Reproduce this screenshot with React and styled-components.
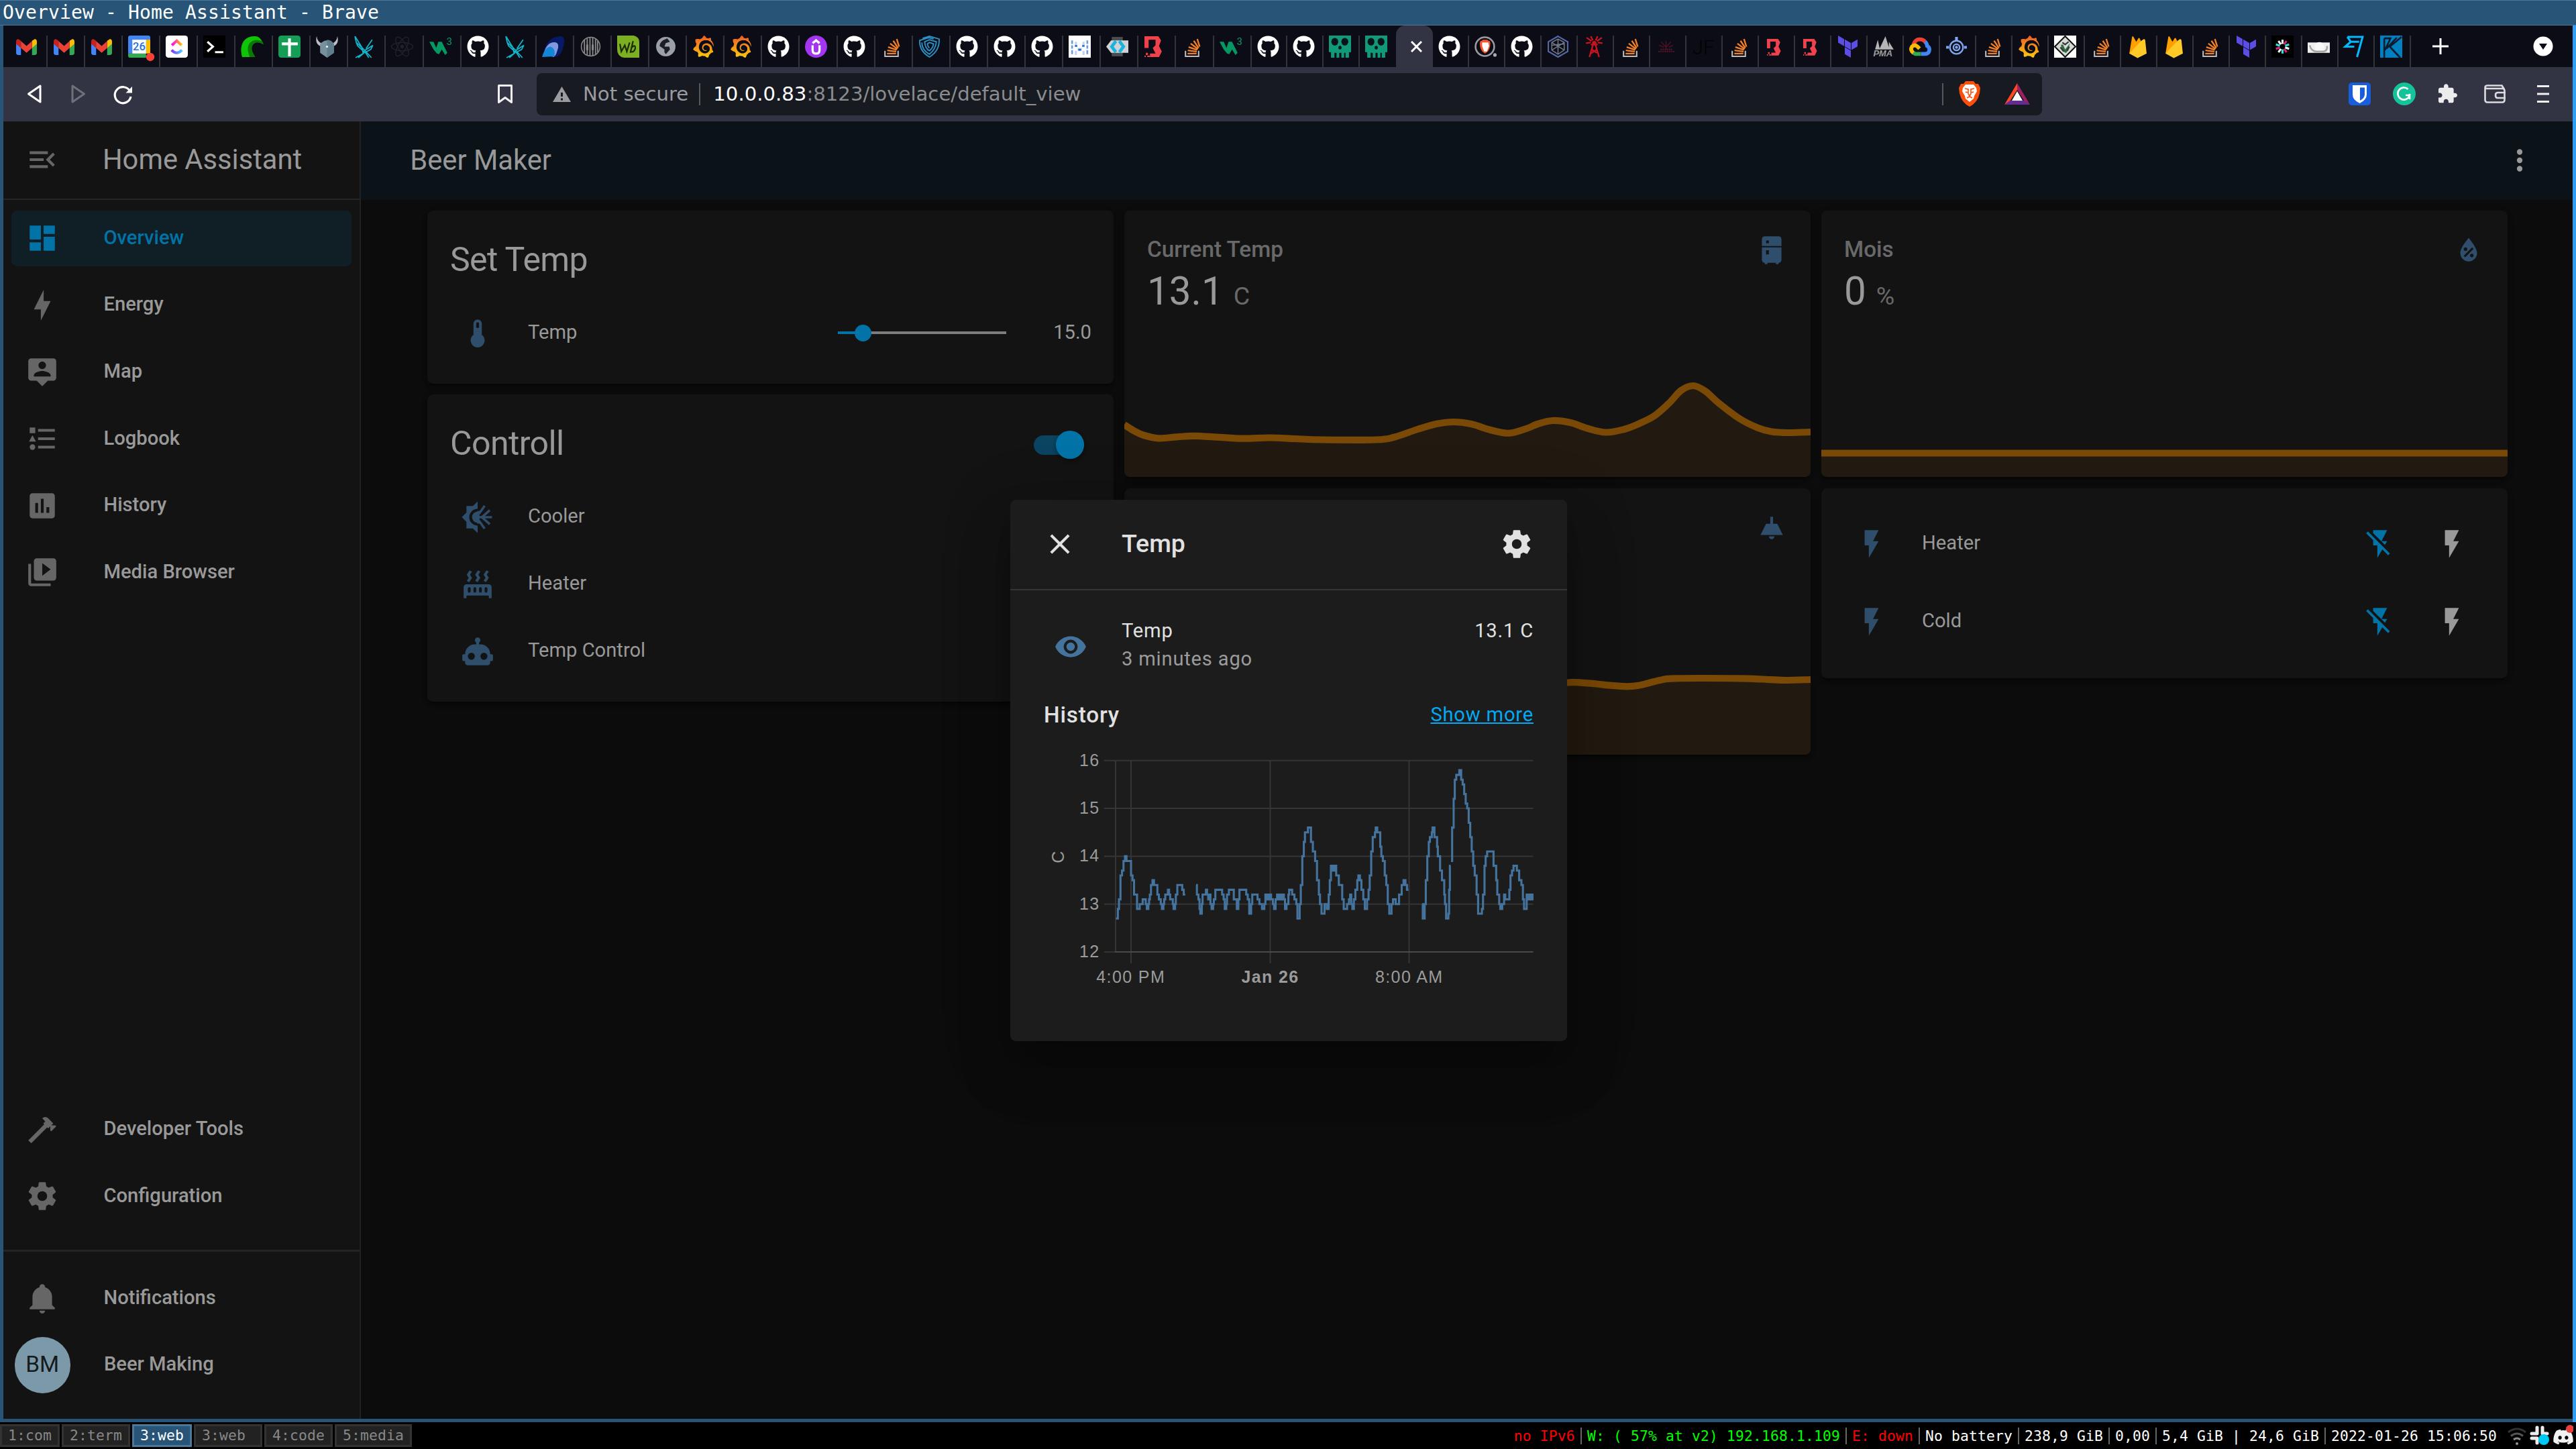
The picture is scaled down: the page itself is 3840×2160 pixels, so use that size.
import React from "react";
import styled, { createGlobalStyle } from "styled-components";
import { FaGithub, FaDiscord } from "react-icons/fa";
import { SiTerraform, SiGrafana } from "react-icons/si";

/* Page lengths are written in CSS pixels of a 200 dpi display. */
const u = (n) => `${(n * 25) / 12}px`;

const c = {
  page: "#0c0c0c",
  card: "#131313",
  header: "#0b1319",
  line: "#222222",
  text: "#999999",
  muted: "#696969",
  icon: "#666666",
  primary: "#0273a6",
  state: "#2e4e6b",
  graph: "#7a4905",
  graphFill: "#221a10",
  dialog: "#1c1c1c",
};

const Global = createGlobalStyle`
  *, *::before, *::after { box-sizing: border-box; }
  body { margin: 0; background: #000; overflow: hidden; }
`;

/* ---------- window frame ---------- */

const Desktop = styled.div`
  width: 3840px;
  height: 2160px;
  display: flex;
  flex-direction: column;
  background: #000;
  font-family: Roboto, "Noto Sans", sans-serif;
`;

const TitleBar = styled.div`
  height: 38px;
  padding-left: 4px;
  background: #285577;
  border: solid #4c7899;
  border-width: 1px 0;
  color: #fff;
  font: 28px/35px "DejaVu Sans Mono", monospace;
  letter-spacing: 0.14px;
  white-space: pre;
`;

const Window = styled.div`
  height: 2082px;
  display: flex;
  flex-direction: column;
  border-left: 5px solid #285577;
  border-right: 5px solid #2e9ef4;
  box-shadow: inset 0 -5px #285577;
  padding-bottom: 5px;
`;

/* ---------- tab strip ---------- */

const TabStrip = styled.div`
  height: 62px;
  flex: none;
  display: flex;
  align-items: flex-end;
  padding: 0 29px 0 9.5px;
  background: #0b0c16;
`;

const Tab = styled.div`
  width: ${(p) => p.$w}px;
  height: 47px;
  flex: none;
  padding-left: 8px;
  border-right: ${(p) => (p.$last ? "0" : "2px solid #333437")};
  svg { display: block; width: 33px; height: 33px; }
`;

const ActiveTab = styled.div`
  width: 55px;
  height: 62px;
  flex: none;
  display: flex;
  justify-content: center;
  padding: 23px 0 0 5px;
  border-radius: 14px 14px 0 0;
  background: #323443;
`;

const NewTab = styled.div`
  width: 88px;
  height: 62px;
  display: flex;
  align-items: center;
  justify-content: center;
`;

const TabSearch = styled.div`
  height: 62px;
  margin-left: auto;
  display: flex;
  align-items: center;
`;

const GradientDefs = styled.svg`
  position: absolute;
  width: 0;
  height: 0;
`;

const Box = ({ children, ...p }) => (
  <svg viewBox="0 0 32 32" overflow="visible" {...p}>{children}</svg>
);

const Gmail = () => (
  <Box>
    <path d="M1 8v17a3 3 0 0 0 3 3h4V13z" fill="#4285f4" />
    <path d="M31 8v17a3 3 0 0 1-3 3h-4V13z" fill="#34a853" />
    <path d="M24 7.5 28 5q3 0 3 4v3l-7 6z" fill="#fbbc04" />
    <path d="M8 7.5 4 5Q1 5 1 9v3l7 6z" fill="#c5221f" />
    <path d="M8 8l8 7 8-7v10l-8 7-8-7z" fill="#ea4335" />
  </Box>
);

const Calendar = () => (
  <Box>
    <path d="M3 0h26q3 0 3 3v6H0V3q0-3 3-3z" fill="#4285f4" />
    <path d="M0 6h6v20H0z" fill="#4285f4" />
    <path d="M26 6h6v20h-6z" fill="#fbbc04" />
    <path d="M0 26h26v6H3q-3 0-3-3z" fill="#34a853" />
    <path d="M6 6h20v20H6z" fill="#fff" />
    <text x="16" y="21.5" fontSize="16" fontFamily="Roboto, sans-serif" fontWeight="500" fill="#1a73e8" textAnchor="middle">26</text>
    <circle cx="32" cy="31" r="6" fill="#f44336" />
  </Box>
);

const ClickUp = () => (
  <Box>
    <defs>
      <linearGradient id="cuA" x1="0" x2="1"><stop stopColor="#ff02f0" /><stop offset="1" stopColor="#ffc800" /></linearGradient>
      <linearGradient id="cuB" x1="0" x2="1"><stop stopColor="#8930fd" /><stop offset="1" stopColor="#49ccf9" /></linearGradient>
    </defs>
    <rect width="32" height="32" rx="4" fill="#fff" />
    <path d="M9 14l7-6.500 7 6.500" fill="none" stroke="url(#cuA)" strokeWidth="4" />
    <path d="M8.500 21q7.500 8 15 0" fill="none" stroke="url(#cuB)" strokeWidth="4" />
  </Box>
);

const Terminal = () => (
  <Box>
    <rect width="32" height="32" fill="#000" />
    <path d="M6 9l8 7-8 7M17 24h12" fill="none" stroke="#fff" strokeWidth="3" />
  </Box>
);

const GreenHook = () => (
  <Box>
    <path d="M2 31C-3 12 6 1 20 1c7 0 11 6 13 12-7-4-13-4-16 1-3 6 1 12 4 17z" fill="#0a7a04" />
    <path d="M2 31C-3 12 6 1 20 1c5 0 8 3 10 7-8-3-16-1-19 6-2 6 0 12 2 17z" fill="#11c307" />
  </Box>
);

const Sheets = () => (
  <Box>
    <rect width="32" height="32" rx="4" fill="#159c57" />
    <path d="M16 4v26M5 12h23" stroke="#fff" strokeWidth="4" />
  </Box>
);

const Viking = () => (
  <Box>
    <path d="M1 1q-3 12 7 15l1-4Q2 9 1 1zM31 1q3 12-7 15l-1-4q7-3 8-11z" fill="#bdbdbd" />
    <path d="M6 12q10-10 20 0v13l-10 7-10-7z" fill="#78909c" />
    <path d="M16 6q6 0 10 6v13l-10 7z" fill="#607d8b" />
    <circle cx="16" cy="16" r="1.500" fill="#fff" />
  </Box>
);

const Origami = () => (
  <Box>
    <path d="M2 1l10 16 14 15M2 1l2 9 13 12M4 10l2 5 10 9M27 6l-9 13M28 14l-11 7M28 14l-3 6-9 5M17 21l-3 5-11 6M15 25l-8 7M17 24l5 8M12 17l2 9" fill="none" stroke="#12b5cb" strokeWidth="1.700" />
  </Box>
);

const Atom = () => (
  <Box fill="none" stroke="#20222b" strokeWidth="1.400">
    <ellipse cx="16" cy="16" rx="15.500" ry="6" />
    <ellipse cx="16" cy="16" rx="15.500" ry="6" transform="rotate(60 16 16)" />
    <ellipse cx="16" cy="16" rx="15.500" ry="6" transform="rotate(120 16 16)" />
    <circle cx="16" cy="16" r="2" fill="#20222b" />
  </Box>
);

const W3 = () => (
  <Box>
    <path d="M0 9h6l4 9 3-9h5l8 16-3 3-5-8-4 7-3-1-5-6z" fill="#059862" />
    <text x="25" y="14" fontSize="14" fontFamily="Roboto, sans-serif" fill="#059862">3</text>
  </Box>
);

const Wave = () => (
  <Box>
    <path d="M3 22Q8 1 29 1q5 3 2 14-2 12-10 16z" fill="#071a66" />
    <path d="M3 24Q8 8 20 10q6 2 2 12-2 7-5 9L3 27z" fill="#8098df" />
    <path d="M0 31q4-14 12-15 8 2 6 14z" fill="#1486d8" />
  </Box>
);

const Globe = () => (
  <Box fill="none" stroke="#8a8a8a">
    <circle cx="16" cy="16" r="13.500" strokeWidth="1.500" />
    <path d="M7 6v20M11 4v24M15 3v26M19 3v26M23 5v22M26 8v16" strokeWidth="1.800" />
    <path d="M11 13v8M19 13v8" strokeWidth="3" />
  </Box>
);

const GreenLeaf = () => (
  <Box>
    <path d="M0 0h24q8 2 8 10v22H10Q0 30 0 20z" fill="#7cb021" />
    <path d="M4 12l2 11 5-9 3 9 4-13M19 25l4-17M21 17q6-5 5 2-2 6-6 4" fill="none" stroke="#1d2b06" strokeWidth="2.200" />
  </Box>
);

const GreyGlobe = () => (
  <Box>
    <circle cx="16" cy="16" r="14" fill="#9aa0a6" />
    <path d="M18 4l4 5-6 2-2 5h7l1 4-6 7-2-3v-4l-7-5q0-7 11-11z" fill="#1b1e26" />
  </Box>
);

const Grafana = () => <SiGrafana fill="url(#grafana)" />;

const Purple = () => (
  <Box>
    <circle cx="16" cy="16" r="16" fill="#a435f0" />
    <path d="M11 14v7q0 5 5 5t5-5v-7M11 11l5-4 5 4" fill="none" stroke="#fff" strokeWidth="3.200" />
  </Box>
);

const GitHub = () => <FaGithub color="#fff" />;

const Overflow = () => (
  <Box>
    <path d="M6 22v8h19v-8" fill="none" stroke="#bcbbbb" strokeWidth="2" />
    <path d="M9 26h13M9.300 21.500l13 1.600M10.500 16.500l12.300 4.300M13.500 11.500l10.500 8M18 7.500l7 10.500M23 5l3.500 11" stroke="#f48024" strokeWidth="2.300" />
  </Box>
);

const Shield = () => (
  <Box fill="none" stroke="#2b8fc4" strokeWidth="1.900">
    <path d="M6 4L16 1l14 4q1 17-14 26Q1 22 2 7l13-4 7 2" />
    <path d="M5 10q0 11 11 17 9-7 10-18l-10-3-7 3q1 10 7 13 5-4 6-10l-6-2-3 2q1 5 3 6" />
  </Box>
);

const Dots = () => (
  <Box>
    <rect width="32" height="32" fill="#fff" />
    <path d="M5 7v5M27 7v5M5 14v5M27 14v5M5 21v6M27 21v6" stroke="#6f9cdb" strokeWidth="2.600" />
    <path d="M9 9h3v7H9zM20 9h3v7h-3zM13 18h6v4h-6zM9 22h3v6H9zM20 22h3v6h-3z" fill="#bdd3f4" />
    <path d="M9 15h3.500M19.500 15H23M14 20.500h4" stroke="#2c68c4" strokeWidth="2.500" />
  </Box>
);

const CodeEye = () => (
  <Box>
    <path d="M8 2h16v28H8z" fill="#4a4d50" />
    <path d="M0 16l7-9h25v18H7z" fill="#d0d3d5" />
    <path d="M14 8l-6 8 6 8M19 8l6 8-6 8" fill="none" stroke="#18b4dd" strokeWidth="4.500" />
  </Box>
);

const RedB = () => (
  <Box>
    <path d="M1 1h20l4 6-3 8 4 8-4 8H9v-5h8l-4-8 4-4V6H7v12H1z" fill="#f0424c" />
    <path d="M1 29h2v2H1zM3 25h3v3H3zM5 29h4v2H5z" fill="#f0424c" />
  </Box>
);

const SmallRedB = () => (
  <Box>
    <g transform="translate(3 4) scale(.8)">
      <path d="M1 1h20l4 6-3 8 4 8-4 8H9v-5h8l-4-8 4-4V6H7v12H1z" fill="#f0424c" />
      <path d="M1 29h2v2H1zM3 25h3v3H3zM5 29h4v2H5z" fill="#f0424c" />
    </g>
  </Box>
);

const Skull = () => (
  <Box>
    <path d="M0 0h32v24h-3v8h-5v-7h-2v7h-4v-7h-3v7h-4v-7H8v7H3v-8H0z" fill="#119a78" />
    <ellipse cx="8.500" cy="9" rx="5" ry="5.500" fill="#07151b" />
    <ellipse cx="23" cy="9" rx="5" ry="5.500" fill="#07151b" />
    <ellipse cx="16" cy="17.500" rx="2.300" ry="2.700" fill="#07151b" />
  </Box>
);

const LION = "M16 0h6l3 3 3 0 2 5-1 8q-3 12-13 16Q6 28 3 16L2 8l2-5h3l3-3z";

const Brave = () => (
  <Box>
    <circle cx="15" cy="16" r="13.500" fill="none" stroke="#9b9ba1" strokeWidth="2.500" />
    <path d={LION} transform="translate(6.500 6) scale(.55 .62)" fill="#fb542b" />
    <path d="M11 10h9l1 5-3 8h-4l-3-8z" fill="#fff" />
    <circle cx="29.500" cy="28" r="2.500" fill="#aaa" />
  </Box>
);

const Hexagon = () => (
  <Box fill="none" stroke="#5669a8" strokeWidth="2">
    <path d="M16 1l14 8v14l-14 8-14-8V9z" />
    <path d="M16 5l9 5v11l-9 6-9-6V10zM7 10l18 11M25 10L7 21M16 5v22M7 14l18-2" stroke="#727787" strokeWidth="1.500" />
  </Box>
);

const Antenna = () => (
  <Box fill="none" stroke="#c9141f" strokeWidth="2.300">
    <path d="M14 14L9 31M18 14l5 17M12 20l8 5M20 20l-9 6M11 13h10M5 3l7 5M27 3l-7 5M4 11l7-1M28 11l-7-1M11 1l3 6M21 1l-3 6" />
    <circle cx="16" cy="11" r="2" fill="#c9141f" />
  </Box>
);

const RedTree = () => (
  <Box>
    <path d="M15 20V8M15 17L8 9M15 17l7-8M12 17l-7-3M19 17l6-3" stroke="#4d1224" strokeWidth="1.500" />
    <path d="M4 23h24M7 20h18" stroke="#5a1629" strokeWidth="2" strokeDasharray="2 1" />
  </Box>
);

const Jf = () => (
  <Box>
    <text x="1" y="27" fontSize="28" fontFamily="Roboto, sans-serif" fontWeight="300" fill="#020203">JF</text>
  </Box>
);

const Terraform = () => <SiTerraform color="#5c4ee5" />;

const Pma = () => (
  <Box>
    <path d="M3 20L7 6l3 14zM9 20L18 1l6 19zM23 20V9l7 11z" fill="#b5b5b5" />
    <text x="0.500" y="30" fontSize="12.500" fontFamily="Liberation Sans, sans-serif" fontWeight="700" fontStyle="italic" fill="#9d9d9d">PMA</text>
  </Box>
);

const GCloud = () => (
  <Box fill="none" strokeWidth="5.500">
    <path d="M6 13Q9 5 16 5.500q5 0 8 5" stroke="#ea4335" />
    <path d="M23 9q3 3 3 6 4 2 3 7-1 5-7 4.500h-5" stroke="#4285f4" />
    <path d="M17 26.500H9l-4-2" stroke="#34a853" />
    <path d="M6 25q-5-4-2-9 4-4 8 0l3 3" stroke="#fbbc05" />
  </Box>
);

const Target = () => (
  <Box fill="none" stroke="#7fa6ee" strokeWidth="2.300">
    <circle cx="16" cy="17" r="9.500" />
    <circle cx="16" cy="17" r="4.500" />
    <circle cx="16" cy="17" r="1" />
    <path d="M16 2v5M1 17h4M27 17h4" strokeWidth="4" />
  </Box>
);

const Diamond = () => (
  <Box>
    <rect width="32" height="32" fill="#fff" />
    <path d="M16 1l15 15-15 15L1 16z" fill="#d5dad5" stroke="#111" strokeWidth="2" />
    <path d="M10 13h3l3 7 7-9-3 9q-2 7-5 4-5-4-5-11z" fill="#2f6b46" />
    <path d="M12 10l4 3 5-4M9 17l5 6M22 16l-3 6" fill="none" stroke="#333" strokeWidth="2" />
  </Box>
);

const Firebase = () => (
  <Box>
    <path d="M4 26L8 2q1-2 2 0l4 7 3-5q1-1 2 0L29 26z" fill="#ffa000" />
    <path d="M4 26l14-15 4-4 3-2q2 0 2 2l2 19-12 6q-1 1-2 0z" fill="#ffca28" />
  </Box>
);

const Burst = () => (
  <Box>
    <rect width="32" height="32" fill="#000" />
    {["#fff", "#e0217d", "#2de5d8", "#fff", "#e0217d", "#2de5d8", "#fff", "#e0217d", "#2de5d8", "#fff"].map((f, i) => (
      <path key={i} d="M16 12V6" stroke={f} strokeWidth="3" transform={`rotate(${i * 36} 16 16)`} />
    ))}
  </Box>
);

const GreyBlob = () => (
  <Box>
    <rect y="10" width="32" height="15" fill="#efefef" />
    <circle cx="17" cy="16.500" r="7" fill="#f8f8f8" />
    <path d="M3 14q2 9 10 9h10q6-1 5-8" fill="none" stroke="#a5a5a5" strokeWidth="2.500" />
  </Box>
);

const Wise = () => (
  <Box fill="none" stroke="#00b9ff" strokeWidth="3">
    <path d="M5 2h22l-8 29M5 2l5 7-8 7h13M10 9h12" />
  </Box>
);

const KBlue = () => (
  <Box>
    <rect width="32" height="32" fill="#0080c0" />
    <path d="M6 4v28M6 4h9L7 21M31 2L14 16l15 16M24 3L9 19" fill="none" stroke="#0c1a2c" strokeWidth="2.500" />
  </Box>
);

const wideTabs = [
  Gmail, Gmail, Gmail, Calendar, ClickUp, Terminal, GreenHook, Sheets, Viking, Origami, Atom, W3, GitHub, Origami,
  Wave, Globe, GreenLeaf, GreyGlobe, Grafana, Grafana, GitHub, Purple, GitHub, Overflow, Shield, GitHub, GitHub,
  GitHub, Dots, CodeEye, RedB, Overflow, W3,
];
const beforeActive = [GitHub, GitHub, Skull, Skull];
const afterActive = [
  GitHub, Brave, GitHub, Hexagon, Antenna, Overflow, RedTree, Jf, Overflow, SmallRedB, SmallRedB, Terraform, Pma, GCloud,
  Target, Overflow, Grafana, Diamond, Overflow, Firebase, Firebase, Overflow, Terraform, Burst, GreyBlob, Wise, KBlue,
];

const Tabs = () => (
  <TabStrip>
    <GradientDefs>
      <defs>
        <linearGradient id="grafana" x1="0" y1="0" x2="0" y2="1">
          <stop stopColor="#f05a28" /><stop offset="1" stopColor="#fbca0a" />
        </linearGradient>
      </defs>
    </GradientDefs>
    {wideTabs.map((I, i) => <Tab key={i} $w={56.1}><I /></Tab>)}
    {beforeActive.map((I, i) => <Tab key={i} $w={53.9} $last={i === 3}><I /></Tab>)}
    <ActiveTab>
      <svg width="17" height="17" viewBox="0 0 17 17"><path d="M1 1l15 15M16 1L1 16" stroke="#fff" strokeWidth="3" /></svg>
    </ActiveTab>
    {afterActive.map((I, i) => <Tab key={i} $w={54}><I /></Tab>)}
    <NewTab>
      <svg width="26" height="26" viewBox="0 0 26 26"><path d="M13 1v24M1 13h24" stroke="#fff" strokeWidth="3" /></svg>
    </NewTab>
    <TabSearch>
      <svg width="30" height="30" viewBox="0 0 30 30">
        <circle cx="15" cy="15" r="14.500" fill="#fff" />
        <path d="M9 11h12l-6 9z" fill="#0b0c16" />
      </svg>
    </TabSearch>
  </TabStrip>
);

/* ---------- address row ---------- */

const Toolbar = styled.div`
  height: 81px;
  flex: none;
  display: flex;
  align-items: center;
  background: #323443;
  padding: 0 10px 1px 13.400px;
`;

const Slot = styled.div`
  width: ${(p) => p.$w || 66}px;
  display: flex;
  justify-content: center;
  svg { display: block; overflow: visible; }
`;

const Bookmark = styled(Slot)`
  margin: 0 14px 0 auto;
`;

const Rewards = styled(Slot)`
  margin-left: 37px;
`;

const AddressBar = styled.div`
  width: 2244px;
  height: 63px;
  display: flex;
  align-items: center;
  margin-right: 439px;
  padding: 0 19px 0 24px;
  border-radius: 8px;
  background: #181a21;
  color: #8b8c90;
  font: 29.17px/34px "DejaVu Sans", sans-serif;
`;

const Rule = styled.span`
  width: 2px;
  height: 33px;
  background: #55575d;
  margin: ${(p) => p.$m};
`;

const Security = styled.span`
  color: #9a9ba1;
  margin-left: 18px;
`;

const Host = styled.span`
  color: #fff;
`;

const BraveLion = () => (
  <svg width="32" height="38" viewBox="0 0 32 38">
    <path d="M10 0h12l3 4 4 0 3 6-1 8q-3 14-15 20Q4 32 1 18L0 10l3-6 4 0z" fill="#fb4f0c" />
    <path d="M10 5h12l4 5 1 5-4 7-1 4-6 5-6-5-1-4-4-7 1-5z" fill="#fff" />
    <path d="M9 11l5 1v7l2 3 2-3v-7l5-1M10 16l3 1M22 16l-3 1M12 25l4-2 4 2" fill="none" stroke="#fb4f0c" strokeWidth="1.600" />
  </svg>
);

const Bat = () => (
  <svg width="38" height="32" viewBox="0 0 38 32">
    <path d="M19 0L0 32l8-5L19 10z" fill="#ff4724" />
    <path d="M19 0l19 32-8-5L19 10z" fill="#9e1f63" />
    <path d="M0 32h38l-8-6H8z" fill="#662d91" />
    <path d="M19 12l8 14H11z" fill="#fff" />
  </svg>
);

const AddressRow = () => (
  <Toolbar>
    <Slot><svg width="20" height="28" viewBox="0 0 20 28"><path d="M19 2v24L1.500 14z" fill="none" stroke="#fff" strokeWidth="3" strokeLinejoin="round" /></svg></Slot>
    <Slot><svg width="20" height="28" viewBox="0 0 20 28"><path d="M1 2v24l17.500-12z" fill="none" stroke="#6f7079" strokeWidth="3" strokeLinejoin="round" /></svg></Slot>
    <Slot>
      <svg width="28" height="28" viewBox="0 0 28 28">
        <path d="M24.500 9.500A12 12 0 1 0 26 18" fill="none" stroke="#fff" strokeWidth="3.200" />
        <path d="M28 3v9.500h-9.500z" fill="#fff" />
      </svg>
    </Slot>
    <Bookmark><svg width="22" height="28" viewBox="0 0 22 28"><path d="M1.500 1.500h19v25L11 19.500l-9.500 7z" fill="none" stroke="#f0f0f0" strokeWidth="3" strokeLinejoin="round" /></svg></Bookmark>
    <AddressBar>
      <svg width="27" height="23" viewBox="0 0 27 23">
        <path d="M13.500 0L27 23H0z" fill="#9a9ba1" />
        <path d="M13.500 9v6M13.500 17.500v3" stroke="#181a21" strokeWidth="3" />
      </svg>
      <Security>Not secure</Security>
      <Rule $m="0 19px 0 16px" />
      <Host>10.0.0.83</Host>:8123/lovelace/default_view
      <Rule $m="0 23px 0 auto" />
      <BraveLion />
      <Rewards $w={36}><Bat /></Rewards>
    </AddressBar>
    <Slot $w={68.4}>
      <svg width="33" height="34" viewBox="0 0 33 34">
        <rect width="33" height="34" rx="5" fill="#175ddc" />
        <path d="M6 4h21v14q0 8-10.500 13Q6 26 6 18z" fill="#fff" />
        <path d="M17 7.500h7V18q0 5-7 9z" fill="#175ddc" />
      </svg>
    </Slot>
    <Slot $w={66}>
      <svg width="34" height="34" viewBox="0 0 34 34">
        <circle cx="17" cy="17" r="17" fill="#15c39a" />
        <path d="M22.500 10A9 9 0 1 0 25 19h-6M25 17v8" fill="none" stroke="#fff" strokeWidth="2.600" />
      </svg>
    </Slot>
    <Slot $w={64}>
      <svg width="32" height="32" viewBox="0.500 0 24 24">
        <path d="M20.500 11H19V7c0-1.100-.9-2-2-2h-4V3.500C13 2.120 11.880 1 10.500 1S8 2.120 8 3.500V5H4c-1.100 0-1.990.9-1.990 2v3.800H3.500c1.490 0 2.700 1.210 2.700 2.700s-1.210 2.700-2.700 2.700H2V20c0 1.100.9 2 2 2h3.800v-1.500c0-1.490 1.210-2.700 2.700-2.700 1.490 0 2.700 1.210 2.700 2.700V22H17c1.100 0 2-.9 2-2v-4h1.500c1.380 0 2.500-1.120 2.500-2.500S21.880 11 20.500 11z" fill="#ececec" />
      </svg>
    </Slot>
    <Slot $w={75.200}>
      <svg width="33" height="28" viewBox="0 0 33 28" fill="none" stroke="#dcdce0" strokeWidth="2.600">
        <path d="M1.500 5v18q0 3.500 3.500 3.500h22q3.500 0 3.500-3.500V9q0-3-3.500-3H5Q1.500 6 1.500 4t3-2.500h22L30 7" />
        <path d="M32 12H20q-3 0-3 4t3 4h12" />
      </svg>
    </Slot>
    <Slot $w={68.4}>
      <svg width="20" height="28" viewBox="0 0 20 28"><path d="M1 2.500h18M1 14h18M1 25.500h18" stroke="#f0f0f0" strokeWidth="3" /></svg>
    </Slot>
  </Toolbar>
);

/* ---------- page icons ---------- */

const cut = (x) => `M${x} 14A1 1 0 0 0 ${x - 1} 15V17A1 1 0 0 0 ${x + 1} 17V15A1 1 0 0 0 ${x} 14Z`;

const paths = {
  menuOpen: "M21,15.61L19.59,17L14.58,12L19.59,7L21,8.39L17.44,12L21,15.61M3,6H16V8H3V6M3,13V11H13V13H3M3,18V16H16V18H3Z",
  dashboard: "M13,3V9H21V3M13,21H21V11H13M3,21H11V15H3M3,13H11V3H3V13Z",
  bolt: "M11 15H6L13 1V9H18L11 23V15Z",
  map: "M20,2H4A2,2 0 0,0 2,4V16A2,2 0 0,0 4,18H8L12,22L16,18H20A2,2 0 0,0 22,16V4A2,2 0 0,0 20,2M12,4.3C13.5,4.3 14.7,5.5 14.7,7C14.7,8.5 13.5,9.7 12,9.7C10.5,9.7 9.3,8.5 9.3,7C9.3,5.5 10.5,4.3 12,4.3M18,15H6V14.1C6,12.1 10,11 12,11C14,11 18,12.1 18,14.1V15Z",
  logbook: "M5,9.5L7.5,14H2.5L5,9.5M3,4H7V8H3V4M5,20A2,2 0 0,0 7,18A2,2 0 0,0 5,16A2,2 0 0,0 3,18A2,2 0 0,0 5,20M9,5V7H21V5H9M9,19H21V17H9V19M9,13H21V11H9V13Z",
  chart: "M9 17H7V10H9V17M13 17H11V7H13V17M17 17H15V13H17V17M19 3H5C3.89 3 3 3.89 3 5V19C3 20.1 3.9 21 5 21H19C20.1 21 21 20.1 21 19V5C21 3.89 20.1 3 19 3Z",
  media: "M4,6H2V20A2,2 0 0,0 4,22H18V20H4V6M20,2H8A2,2 0 0,0 6,4V16A2,2 0 0,0 8,18H20A2,2 0 0,0 22,16V4A2,2 0 0,0 20,2M12,14.5V5.5L18,10L12,14.5Z",
  hammer: "M2,19.63L13.43,8.2L12.72,7.5L14.14,6.07L12,3.89C13.2,2.7 15.09,2.7 16.27,3.89L19.87,7.5L18.45,8.91H21.29L22,9.62L18.45,13.21L17.74,12.5V9.62L16.27,11.04L15.56,10.33L4.13,21.76L2,19.63Z",
  cog: "M12,15.5A3.5,3.5 0 0,1 8.5,12A3.5,3.5 0 0,1 12,8.5A3.5,3.5 0 0,1 15.5,12A3.5,3.5 0 0,1 12,15.5M19.43,12.97C19.47,12.65 19.5,12.33 19.5,12C19.5,11.67 19.47,11.34 19.43,11L21.54,9.37C21.73,9.22 21.78,8.95 21.66,8.73L19.66,5.27C19.54,5.05 19.27,4.96 19.05,5.05L16.56,6.05C16.04,5.66 15.5,5.32 14.87,5.07L14.5,2.42C14.46,2.18 14.25,2 14,2H10C9.75,2 9.54,2.18 9.5,2.42L9.13,5.07C8.5,5.32 7.96,5.66 7.44,6.05L4.95,5.05C4.73,4.96 4.46,5.05 4.34,5.27L2.34,8.73C2.21,8.95 2.27,9.22 2.46,9.37L4.57,11C4.53,11.34 4.5,11.67 4.5,12C4.5,12.33 4.53,12.65 4.57,12.97L2.46,14.63C2.27,14.78 2.21,15.05 2.34,15.27L4.34,18.73C4.46,18.95 4.73,19.03 4.95,18.95L7.44,17.94C7.96,18.34 8.5,18.68 9.13,18.93L9.5,21.58C9.54,21.82 9.75,22 10,22H14C14.25,22 14.46,21.82 14.5,21.58L14.87,18.93C15.5,18.67 16.04,18.34 16.56,17.94L19.05,18.95C19.27,19.03 19.54,18.95 19.66,18.73L21.66,15.27C21.78,15.05 21.73,14.78 21.54,14.63L19.43,12.97Z",
  bell: "M21,19V20H3V19L5,17V11C5,7.9 7.03,5.17 10,4.29C10,4.19 10,4.1 10,4A2,2 0 0,1 12,2A2,2 0 0,1 14,4C14,4.1 14,4.19 14,4.29C16.97,5.17 19,7.9 19,11V17L21,19M14,21A2,2 0 0,1 12,23A2,2 0 0,1 10,21",
  dots: "M12,16A2,2 0 0,1 14,18A2,2 0 0,1 12,20A2,2 0 0,1 10,18A2,2 0 0,1 12,16M12,10A2,2 0 0,1 14,12A2,2 0 0,1 12,14A2,2 0 0,1 10,12A2,2 0 0,1 12,10M12,4A2,2 0 0,1 14,6A2,2 0 0,1 12,8A2,2 0 0,1 10,6A2,2 0 0,1 12,4Z",
  thermometer: "M15 13V5A3 3 0 0 0 9 5V13A5 5 0 1 0 15 13M12 4A1 1 0 0 1 13 5V8H11V5A1 1 0 0 1 12 4Z",
  sunSnow: "M12 .7L8.600 4H4V8.600L.700 12L4 15.400V20H8.600L12 23.300V18A6 6 0 0 1 12 6ZM12 8A4 4 0 0 0 12 16Z",
  radiator: `M7.95,3L6.53,5.19L7.95,7.4H7.94L5.95,10.5L4.22,9.6L5.64,7.39L4.22,5.19L6.22,2.09L7.95,3M13.95,2.89L12.53,5.1L13.95,7.3L13.94,7.31L11.95,10.4L10.22,9.5L11.64,7.3L10.22,5.1L12.22,2L13.95,2.89M20,2.89L18.56,5.1L20,7.3V7.31L18,10.4L16.25,9.5L17.67,7.3L16.25,5.1L18.25,2L20,2.89M2,22V14A2,2 0 0,1 4,12H20A2,2 0 0,1 22,14V22H20V20H4V22H2${cut(6)}${cut(10)}${cut(14)}${cut(18)}`,
  robot: "M12,2A2,2 0 0,1 14,4C14,4.74 13.6,5.39 13,5.73V7H14A7,7 0 0,1 21,14H22A1,1 0 0,1 23,15V18A1,1 0 0,1 22,19H21V20A2,2 0 0,1 19,22H5A2,2 0 0,1 3,20V19H2A1,1 0 0,1 1,18V15A1,1 0 0,1 2,14H3A7,7 0 0,1 10,7H11V5.73C10.4,5.39 10,4.74 10,4A2,2 0 0,1 12,2M7.5,13A2.5,2.5 0 0,0 5,15.5A2.5,2.5 0 0,0 7.5,18A2.5,2.5 0 0,0 10,15.5A2.5,2.5 0 0,0 7.5,13M16.5,13A2.5,2.5 0 0,0 14,15.5A2.5,2.5 0 0,0 16.5,18A2.5,2.5 0 0,0 19,15.5A2.5,2.5 0 0,0 16.5,13Z",
  fridge: "M7,2H17A2,2 0 0,1 19,4V9H5V4A2,2 0 0,1 7,2M19,19A2,2 0 0,1 17,21V22H15V21H9V22H7V21A2,2 0 0,1 5,19V10H19V19M8,5V7H10V5H8M8,12V15H10V12H8Z",
  humidity: "M12,3.25C12,3.25 6,10 6,14C6,17.32 8.69,20 12,20A6,6 0 0,0 18,14C18,10 12,3.25 12,3.25M14.47,9.97L15.53,11.03L9.53,17.03L8.47,15.97M9.75,10A1.25,1.25 0 0,1 11,11.25A1.25,1.25 0 0,1 9.75,12.5A1.25,1.25 0 0,1 8.5,11.25A1.25,1.25 0 0,1 9.75,10M14.25,14.5A1.25,1.25 0 0,1 15.5,15.75A1.25,1.25 0 0,1 14.25,17A1.25,1.25 0 0,1 13,15.75A1.25,1.25 0 0,1 14.25,14.5Z",
  lamp: "M8,9H11V4H13V9H16L20,17H4L8,9M14,18A2,2 0 0,1 12,20A2,2 0 0,1 10,18H14Z",
  flash: "M7,2V13H10V22L17,10H13L17,2H7Z",
  flashOff: "M17,10H13L17,2H7V4.18L15.46,12.64M3.27,3L2,4.27L7,9.27V13H10V22L13.58,15.86L17.73,20L19,18.73L3.27,3Z",
  eye: "M12,9A3,3 0 0,0 9,12A3,3 0 0,0 12,15A3,3 0 0,0 15,12A3,3 0 0,0 12,9M12,17A5,5 0 0,1 7,12A5,5 0 0,1 12,7A5,5 0 0,1 17,12A5,5 0 0,1 12,17M12,4.5C7,4.5 2.73,7.61 1,12C2.73,16.39 7,19.5 12,19.5C17,19.5 21.27,16.39 23,12C21.27,7.61 17,4.5 12,4.5Z",
  close: "M19,6.41L17.59,5L12,10.59L6.41,5L5,6.41L10.59,12L5,17.59L6.41,19L12,13.41L17.59,19L19,17.59L13.41,12L19,6.41Z",
};

/* Branches of the snowflake half, stroked over the filled sun half. */
const branches = {
  sunSnow: "M12.500 7.500V16.500M12 12H22.300M13 9.500L17 3.800M13 14.500L17 20.200M15 12L20.700 7M15 12L20.700 17",
};

const IconSvg = styled.svg`
  width: ${u(24)};
  height: ${u(24)};
  flex: none;
  display: block;
  fill: ${(p) => p.$color};
`;

const Icon = ({ name, color, className }) => (
  <IconSvg viewBox="0 0 24 24" $color={color} className={className}>
    <path d={paths[name]} fillRule="evenodd" />
    {branches[name] && <path d={branches[name]} fill="none" stroke={color} strokeWidth="1.700" />}
  </IconSvg>
);

/* ---------- sidebar ---------- */

const Page = styled.div`
  position: relative;
  height: 1934px;
  display: flex;
  background: ${c.page};
`;

const Sidebar = styled.div`
  width: ${u(256)};
  flex: none;
  display: flex;
  flex-direction: column;
  background: ${c.card};
  border-right: 2px solid #222;
`;

const SidebarHead = styled.div`
  height: ${u(56)};
  flex: none;
  display: flex;
  align-items: center;
  gap: ${u(31.2)};
  padding-left: ${u(15.800)};
  border-bottom: 2px solid #262626;
  color: ${c.text};
  font-size: ${u(20)};
  line-height: 50px;
  span { padding-bottom: 1px; }
`;

const NavList = styled.div`
  display: flex;
  flex-direction: column;
  gap: 16.300px;
  padding: ${(p) => p.$pad};
  border-top: ${(p) => (p.$ruled ? "3px solid #232323" : "0")};
`;

const Grow = styled.div`
  flex: 1;
`;

const NavItem = styled.div`
  height: ${u(40)};
  display: flex;
  align-items: center;
  gap: ${(p) => (p.$avatar ? u(24) : u(31.8))};
  padding-left: ${(p) => (p.$avatar ? u(2.200) : u(10.200))};
  border-radius: ${u(4)};
  background: ${(p) => (p.$active ? "#101e25" : "transparent")};
  color: ${(p) => (p.$active ? c.primary : c.text)};
  font-size: ${u(14)};
  font-weight: 500;
  line-height: 40px;
  span { padding-bottom: 3px; }
`;

const Avatar = styled.div`
  width: ${u(40)};
  height: ${u(40)};
  border-radius: 50%;
  background: #7b99a9;
  color: #151a1d;
  font-size: ${u(16)};
  font-weight: 400;
  line-height: 81px;
  text-align: center;
`;

const Nav = ({ icon, label, active }) => (
  <NavItem $active={active}>
    <Icon name={icon} color={active ? c.primary : c.icon} />
    <span>{label}</span>
  </NavItem>
);

const SidePanel = () => (
  <Sidebar>
    <SidebarHead>
      <Icon name="menuOpen" color={c.icon} />
      <span>Home Assistant</span>
    </SidebarHead>
    <NavList $pad="16px 12px 0">
      <Nav icon="dashboard" label="Overview" active />
      <Nav icon="bolt" label="Energy" />
      <Nav icon="map" label="Map" />
      <Nav icon="logbook" label="Logbook" />
      <Nav icon="chart" label="History" />
      <Nav icon="media" label="Media Browser" />
    </NavList>
    <Grow />
    <NavList $pad="0 12px 37.500px">
      <Nav icon="hammer" label="Developer Tools" />
      <Nav icon="cog" label="Configuration" />
    </NavList>
    <NavList $ruled $pad="28px 12px 38.500px">
      <Nav icon="bell" label="Notifications" />
      <NavItem $avatar>
        <Avatar>BM</Avatar>
        <span>Beer Making</span>
      </NavItem>
    </NavList>
  </Sidebar>
);

/* ---------- dashboard ---------- */

const Main = styled.div`
  flex: 1;
  display: flex;
  flex-direction: column;
`;

const ViewHeader = styled.div`
  height: ${u(56)};
  flex: none;
  display: flex;
  align-items: center;
  justify-content: space-between;
  padding: 0 54px 0 73px;
  background: ${c.header};
  color: ${c.text};
  font-size: ${u(20)};
  line-height: 50px;
  span { padding-bottom: 1px; }
`;

const Columns = styled.div`
  display: grid;
  grid-template-columns: repeat(3, 1023px);
  column-gap: 16px;
  align-items: start;
  padding: 16px 0 0 98.700px;
`;

const Column = styled.div`
  display: flex;
  flex-direction: column;
  gap: ${(p) => p.$gap || 17}px;
`;

const Card = styled.div`
  height: ${(p) => p.$h}px;
  display: flex;
  flex-direction: column;
  border-radius: ${u(4)};
  background: ${c.card};
  box-shadow: 0 ${u(2)} ${u(2)} 0 rgba(0, 0, 0, 0.14), 0 ${u(1)} ${u(5)} 0 rgba(0, 0, 0, 0.12),
    0 ${u(3)} ${u(1)} ${u(-2)} rgba(0, 0, 0, 0.2);
  overflow: hidden;
`;

const CardTitle = styled.div`
  height: 142px;
  display: flex;
  align-items: center;
  justify-content: space-between;
  padding: 4px 44px 0 34px;
  color: ${c.text};
  font-size: ${u(24)};
  letter-spacing: -0.012em;
  line-height: 58px;
`;

const Rows = styled.div`
  display: flex;
  flex-direction: column;
  gap: ${(p) => p.$gap};
  padding: ${(p) => p.$pad};
`;

const Row = styled.div`
  height: ${u(40)};
  display: flex;
  align-items: center;
  color: ${c.text};
  font-size: ${u(14)};
  line-height: 40px;
`;

const RowName = styled.span`
  flex: 1;
  margin-left: 50px;
  padding-bottom: 4px;
`;

const Slider = styled.div`
  width: 251px;
  height: 4px;
  display: flex;
  align-items: center;
  margin: 0 0 2px;
  background: linear-gradient(90deg, ${c.primary} 38px, #7d7d7d 38px);
`;

const Knob = styled.div`
  width: 25px;
  height: 25px;
  margin-left: 25.500px;
  border-radius: 50%;
  background: ${c.primary};
`;

const RowValue = styled.span`
  width: 127.500px;
  padding-bottom: 4px;
  text-align: right;
`;

const Switch = styled.div`
  width: ${u(36)};
  height: ${u(14)};
  margin-top: 5px;
  display: flex;
  align-items: center;
  justify-content: flex-end;
  border-radius: ${u(7)};
  background: #0a4460;
`;

const Thumb = styled.div`
  width: ${u(20)};
  height: ${u(20)};
  flex: none;
  border-radius: 50%;
  background: ${c.primary};
  box-shadow: 0 3px 6px rgba(0, 0, 0, 0.4);
`;

const ActionIcons = styled.div`
  display: flex;
  gap: 57px;
`;

const GraphHead = styled.div`
  display: flex;
  justify-content: space-between;
  height: 50px;
  margin-top: 34px;
  padding: 0 33px 0 34px;
`;

const GraphName = styled.div`
  color: ${c.muted};
  font-size: ${u(16)};
  font-weight: 500;
  line-height: 48px;
`;

const GraphState = styled.div`
  display: flex;
  align-items: baseline;
  gap: 15px;
  padding-left: 34px;
  margin-top: 1px;
  color: ${c.text};
  font-size: ${u(28)};
  line-height: 70px;
`;

const GraphUnit = styled.span`
  color: ${c.muted};
  font-size: ${u(18)};
`;

const GraphSvg = styled.svg`
  display: block;
  width: 1023px;
  height: 200px;
  margin-top: auto;
`;

/* Catmull-Rom spline through the sample points. */
const spline = (pts) => {
  let d = `M${pts[0][0]} ${pts[0][1]}`;
  for (let i = 0; i < pts.length - 1; i++) {
    const p0 = pts[i - 1] || pts[i];
    const [p1, p2] = [pts[i], pts[i + 1]];
    const p3 = pts[i + 2] || p2;
    const k = 6;
    d += `C${p1[0] + (p2[0] - p0[0]) / k} ${p1[1] + (p2[1] - p0[1]) / k} ${p2[0] - (p3[0] - p1[0]) / k} ${p2[1] - (p3[1] - p1[1]) / k} ${p2[0]} ${p2[1]}`;
  }
  return d;
};

const tempLine = [
  [0, 122], [14, 131], [28, 137.5], [51, 142.3], [78, 140.3], [105, 138.8], [139, 140.7], [176, 142.7], [217, 141.5], [254, 143],
  [295, 144.5], [376, 144.5], [403, 140.5], [437, 129], [465, 121], [491, 118], [517, 121], [546, 130], [574, 134.7], [602, 127], [615, 121.5], [638, 116],
  [665, 119], [690, 127.5], [718, 133.5], [745, 129], [765, 121.5], [790, 109], [812, 90], [830, 71], [848, 64], [866, 72], [885, 89], [917, 113],
  [945, 127], [965, 132.500], [990, 134], [1023, 133],
];
const lightLine = [
  [0, 96], [300, 100], [560, 98], [661, 92.5], [677, 92.3], [704, 94.5], [724, 96.7], [749, 98.3], [767, 96.8], [784, 92.5], [801, 88.5], [821, 86.3],
  [917, 86.3], [951, 87.5], [984, 89], [1023, 88],
];
const flatLine = [[0, 164.5], [1023, 164.5]];

const GraphCard = ({ name, value, unit, icon, line }) => {
  const d = spline(line);
  return (
    <Card $h={397}>
      <GraphHead>
        <GraphName>{name}</GraphName>
        <Icon name={icon} color={c.state} />
      </GraphHead>
      <GraphState>
        {value} <GraphUnit>{unit}</GraphUnit>
      </GraphState>
      <GraphSvg viewBox="0 0 1023 200">
        <path d={`${d}V200H0Z`} fill={c.graphFill} />
        <path d={d} fill="none" stroke={c.graph} strokeWidth="10.200" />
      </GraphSvg>
    </Card>
  );
};

const StateRow = ({ icon, name, children }) => (
  <Row>
    <Icon name={icon} color={c.state} />
    <RowName>{name}</RowName>
    {children}
  </Row>
);

const SwitchRow = ({ name }) => (
  <StateRow icon="flash" name={name}>
    <ActionIcons>
      <Icon name="flashOff" color={c.primary} />
      <Icon name="flash" color={c.text} />
    </ActionIcons>
  </StateRow>
);

const Dashboard = () => (
  <Main>
    <ViewHeader>
      <span>Beer Maker</span>
      <Icon name="dots" color={c.text} />
    </ViewHeader>
    <Columns>
      <Column $gap={16}>
        <Card $h={258}>
          <CardTitle>Set Temp</CardTitle>
          <Rows $gap="0" $pad="0 33px 0 50px">
            <StateRow icon="thermometer" name="Temp">
              <Slider><Knob /></Slider>
              <RowValue>15.0</RowValue>
            </StateRow>
          </Rows>
        </Card>
        <Card $h={458}>
          <CardTitle>
            Controll
            <Switch><Thumb /></Switch>
          </CardTitle>
          <Rows $gap="16.670px" $pad="0 33px 0 50px">
            <StateRow icon="sunSnow" name="Cooler" />
            <StateRow icon="radiator" name="Heater" />
            <StateRow icon="robot" name="Temp Control" />
          </Rows>
        </Card>
      </Column>
      <Column>
        <GraphCard name="Current Temp" value="13.1" unit="C" icon="fridge" line={tempLine} />
        <GraphCard name="" value="" unit="" icon="lamp" line={lightLine} />
      </Column>
      <Column>
        <GraphCard name="Mois" value="0" unit="%" icon="humidity" line={flatLine} />
        <Card $h={283}>
          <Rows $gap="33.330px" $pad="41.500px 58px 0 50px">
            <SwitchRow name="Heater" />
            <SwitchRow name="Cold" />
          </Rows>
        </Card>
      </Column>
    </Columns>
  </Main>
);

/* ---------- more-info dialog ---------- */

const Overlay = styled.div`
  position: absolute;
  inset: 0;
  display: flex;
  align-items: center;
  justify-content: center;
  padding-left: 2px;
`;

const Dialog = styled.div`
  width: 830px;
  height: 807px;
  display: flex;
  flex-direction: column;
  border-radius: ${u(4)};
  background: ${c.dialog};
  color: #e1e1e1;
  box-shadow: 0 ${u(11)} ${u(15)} ${u(-7)} rgba(0, 0, 0, 0.2), 0 ${u(24)} ${u(38)} ${u(3)} rgba(0, 0, 0, 0.14),
    0 ${u(9)} ${u(46)} ${u(8)} rgba(0, 0, 0, 0.12);
`;

const DialogHead = styled.div`
  height: 135px;
  flex: none;
  display: flex;
  align-items: center;
  padding: 0 50px 0 49px;
  border-bottom: 2px solid #353535;
  font-size: ${u(18)};
  font-weight: 500;
  line-height: 50px;
`;

const DialogTitle = styled.span`
  flex: 1;
  padding: 0 0 3px 67px;
`;

const DialogBody = styled.div`
  display: flex;
  flex-direction: column;
  padding: 40.500px 50px 0;
  font-size: ${u(14)};
  letter-spacing: 0.8px;
  line-height: ${u(20)};
`;

const StateInfo = styled.div`
  display: flex;
  padding-left: 15px;
  svg { margin-top: 18.500px; }
`;

const StateNames = styled.div`
  flex: 1;
  margin-left: 51px;
`;

const Ago = styled.div`
  color: #9b9b9b;
`;

const HistoryHead = styled.div`
  display: flex;
  align-items: center;
  justify-content: space-between;
  height: 42px;
  margin-top: 41.500px;
`;

const HistoryTitle = styled.span`
  font-size: ${u(16)};
  font-weight: 500;
`;

const MoreLink = styled.a`
  color: #03a9f4;
  text-decoration: underline;
`;

const ChartSvg = styled.svg`
  display: block;
  width: 730px;
  height: 370px;
  margin-top: 32px;
  font-family: "Liberation Sans", Arial, sans-serif;
  font-size: 25px;
  letter-spacing: 1.4px;
  fill: #9b9b9b;
`;

/* Recorded states as "sample:temperature"; the last sample of each run closes it. */
const runs = [
  "309:12.7 314:12.9 317:13.1 321:13.6 325:13.7 329:13.9 333:14 337:13.9 349:13.6 353:13.5 357:13.2 365:12.9 372:13 380:13.1 388:13 391:12.9 395:13 397:13.1 399:13.2 402:13.4 406:13.5 410:13.4 419:13.2 423:13.1 428:13 431:12.9 435:13 437:13.1 440:13.2 447:13.3 450:13.2 453:13.1 460:13 462:12.9 466:13 468:13.2 472:13.4 485:13.3 489:13.2 493:13.2",
  "522:13.4 524:13.2 528:13.1 531:12.9 533:12.8 537:13 539:13.2 548:13.3 551:13.2 554:13.1 557:13.2 560:13 563:12.9 567:13 569:13.1 573:13.3 591:13.2 595:13.1 598:12.9 602:13 604:13.2 609:13.3 622:13.1 630:12.9 634:13.1 637:13.3 655:13.2 659:13.1 663:12.8 668:13 671:13.2 685:13.1 690:13 697:12.9 703:13 706:13.2 708:13.1 711:13.2 713:13.1 716:13.2 721:13.1 726:13 729:12.9 733:13.1 737:13.2 742:13.1 745:13.2 748:13.1 751:13.2 755:13.1 758:12.9 762:13 767:13.2 769:13.3 777:13.2 783:13.1 788:13 791:12.7 797:13 800:13.4 804:14 808:14.3 811:14.5 819:14.6 827:14.3 832:14.1 838:13.9 843:13.5 848:13.2 851:13 855:12.8 863:13 869:12.9 874:13.2 877:13.5 880:13.8 883:13.7 886:13.8 889:13.7 891:13.8 894:13.6 901:13.4 910:13.1 914:12.9 923:13 928:13.1 931:13.2 934:13 937:12.9 941:13.1 945:13.3 950:13.5 953:13.6 957:13.5 961:13.3 966:13.1 970:12.9 976:13.1 980:13.3 983:13.6 987:14.1 991:14.4 997:14.5 999:14.6 1003:14.5 1011:14.2 1014:14 1018:13.9 1023:13.6 1027:13.4 1031:13 1035:12.8 1041:13 1045:13.1 1052:13 1061:13.2 1068:13.4 1073:13.5 1078:13.4 1082:13.3 1086:13.3",
  "1122:13 1124:12.7 1129:13 1132:13.5 1136:14 1140:14.3 1143:14.4 1148:14.5 1150:14.6 1155:14.4 1162:14.2 1164:14 1170:13.7 1175:13.5 1181:13.2 1183:13 1186:12.7 1192:12.8 1194:13.3 1196:13.8 1198:13.8",
  "1199:13.9 1202:14.6 1206:15.2 1209:15.6 1213:15.7 1221:15.8 1226:15.6 1230:15.5 1234:15.3 1238:15.1 1242:15 1246:14.7 1250:14.4 1254:14.1 1258:13.8 1262:13.6 1267:13.2 1271:12.8 1281:12.9 1284:13.2 1288:13.8 1291:14 1295:14.1 1312:13.8 1319:13.5 1322:13.2 1327:13 1330:12.9 1335:13 1340:13.2 1343:13.1 1354:13.3 1357:13.6 1361:13.7 1365:13.8 1374:13.7 1380:13.5 1386:13.4 1390:13.1 1393:12.9 1400:13.2 1404:13.1 1407:13.2 1410:13.1 1413:13.2 1416:13.1 1418:13.1",
];

const stepPath = (run) =>
  run
    .split(" ")
    .map((s) => s.split(":").map(Number))
    .map(([t, v], i) => {
      const x = (107 + (t - 308) / 1.782).toFixed(2);
      const y = (300.1 - (v - 12) * 71.35).toFixed(2);
      return i ? `H${x}V${y}` : `M${x} ${y}`;
    })
    .join("");

const HistoryChart = () => (
  <ChartSvg viewBox="0 0 730 370">
    <g stroke="#353535" strokeWidth="2">
      {[0, 1, 2, 3].map((i) => <path key={i} d={`M90 ${14.7 + i * 71.35}H729.500`} />)}
      <path d="M90 300.100H107" />
      <path d="M107 14.700V300M130 14.700V317M337.500 14.700V317M544.500 14.700V317" />
    </g>
    <path d="M106 300.100H729.500" stroke="#4a4a4a" strokeWidth="2" />
    {[16, 15, 14, 13, 12].map((n, i) => (
      <text key={n} x="83.500" y={22.7 + i * 71.35} textAnchor="end">{n}</text>
    ))}
    <text x="129.700" y="345.500" textAnchor="middle">4:00 PM</text>
    <text x="337.500" y="345.500" textAnchor="middle" fontWeight="700">Jan 26</text>
    <text x="544.700" y="345.500" textAnchor="middle">8:00 AM</text>
    <text transform="translate(29.500 158) rotate(-90)" textAnchor="middle">C</text>
    {runs.map((r, i) => (
      <path key={i} d={stepPath(r)} fill="none" stroke="#44739e" strokeWidth="3.100" />
    ))}
  </ChartSvg>
);

const MoreInfo = () => (
  <Overlay>
    <Dialog>
      <DialogHead>
        <Icon name="close" color="#e1e1e1" />
        <DialogTitle>Temp</DialogTitle>
        <Icon name="cog" color="#e1e1e1" />
      </DialogHead>
      <DialogBody>
        <StateInfo>
          <Icon name="eye" color="#44739e" />
          <StateNames>
            <div>Temp</div>
            <Ago>3 minutes ago</Ago>
          </StateNames>
          <div>13.1 C</div>
        </StateInfo>
        <HistoryHead>
          <HistoryTitle>History</HistoryTitle>
          <MoreLink>Show more</MoreLink>
        </HistoryHead>
        <HistoryChart />
      </DialogBody>
    </Dialog>
  </Overlay>
);

/* ---------- i3 bar ---------- */

const Bar = styled.div`
  height: 40px;
  display: flex;
  align-items: center;
  gap: 3px;
  background: #000;
  color: #fff;
  font: 21.330px/28px "DejaVu Sans Mono", monospace;
  letter-spacing: 0.160px;
  white-space: pre;
`;

const Workspace = styled.div`
  height: 34px;
  padding: 0 9px;
  border: 3px solid ${(p) => (p.$focused ? "#4c7899" : "#333333")};
  background: ${(p) => (p.$focused ? "#285577" : "#222222")};
  color: ${(p) => (p.$focused ? "#fff" : "#888888")};
`;

const Status = styled.div`
  margin-left: auto;
  padding-right: 4px;
  display: flex;
  align-items: center;
`;

const Block = styled.span`
  padding-top: 1px;
  color: ${(p) => p.$color || "#fff"};
`;

const Separator = styled.span`
  width: 2px;
  height: 25px;
  margin: 0 8px;
  background: #666;
`;

const Tray = styled.div`
  display: flex;
  align-items: center;
  gap: 2px;
  margin-left: 14px;
  svg { display: block; width: 32px; height: 32px; }
`;

const workspaces = ["1:com", "2:term", "3:web", "3:web ", "4:code", "5:media"];
const blocks = [
  ["no IPv6", "#ff0000"],
  ["W: ( 57% at v2) 192.168.1.109", "#00ff00"],
  ["E: down", "#ff0000"],
  ["No battery"],
  ["238,9 GiB"],
  ["0,00"],
  ["5,4 GiB | 24,6 GiB"],
  ["2022-01-26 15:06:50"],
];

const StatusBar = () => (
  <Bar>
    {workspaces.map((w, i) => <Workspace key={w} $focused={i === 2}>{w}</Workspace>)}
    <Status>
      {blocks.map(([text, color], i) => (
        <React.Fragment key={text}>
          {i > 0 && <Separator />}
          <Block $color={color}>{text}</Block>
        </React.Fragment>
      ))}
      <Tray>
        <svg viewBox="0 0 32 32" fill="none" strokeWidth="3">
          <path d="M3 11q13-10 26 0" stroke="#333" />
          <path d="M7 16.500q9-7 18 0" stroke="#555" />
          <path d="M11 22q5-4 10 0" stroke="#888" />
          <circle cx="16" cy="28" r="2" fill="#999" />
        </svg>
        <svg viewBox="0 0 32 32" stroke="#ececec" strokeWidth="5" strokeLinecap="round">
          <path d="M12 4v9M20 4v9M4 13h8M20 13h7M4 20h8M12 20v7" />
          <circle cx="22" cy="22" r="8" fill="#00c8f5" stroke="none" />
        </svg>
        <svg viewBox="0 0 32 32">
          <FaDiscord x="1" y="2" size="29" color="#f2f2f2" />
          <circle cx="27" cy="6" r="6" fill="#e8403a" />
        </svg>
      </Tray>
    </Status>
  </Bar>
);

export default function App() {
  return (
    <Desktop>
      <Global />
      <TitleBar>Overview - Home Assistant - Brave</TitleBar>
      <Window>
        <Tabs />
        <AddressRow />
        <Page>
          <SidePanel />
          <Dashboard />
          <MoreInfo />
        </Page>
      </Window>
      <StatusBar />
    </Desktop>
  );
}
